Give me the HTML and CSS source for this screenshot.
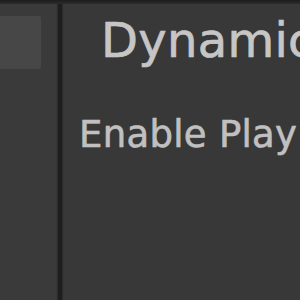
FILE: index.html
```html
<!DOCTYPE html>
<html>
<head>
<meta charset="utf-8">
<link rel="stylesheet" href="styles.css">
</head>
<body>
<div class="topbar"></div>
<div class="main">
  <aside class="sidebar">
    <div class="tile"></div>
  </aside>
  <div class="divider"></div>
  <section class="content">
    <h1 class="title">Dynamic</h1>
    <p class="option">Enable Play</p>
  </section>
</div>
</body>
</html>
```
FILE: styles.css
```css
html, body {
  margin: 0;
  padding: 0;
  width: 300px;
  height: 300px;
  overflow: hidden;
  background: #383838;
  font-family: "DejaVu Sans", sans-serif;
}
.topbar {
  height: 4px;
  background: linear-gradient(#1c1c1c, #2c2c2c);
}
.main {
  display: flex;
  height: 296px;
}
.sidebar {
  width: 58px;
  background: #3a3a3a;
  padding-top: 12px;
  box-sizing: border-box;
}
.tile {
  width: 41px;
  height: 53px;
  background: #474747;
  border-radius: 0 2px 2px 0;
}
.divider {
  width: 4px;
  background: #1e1e1e;
  box-shadow: -1px 0 1px #2c2c2c, 1px 0 1px #2c2c2c;
}
.content {
  flex: 1;
  padding-left: 17px;
  padding-top: 8px;
  white-space: nowrap;
  overflow: hidden;
}
.title {
  margin: 0 0 0 22px;
  font-size: 48px;
  font-weight: normal;
  line-height: 56px;
  letter-spacing: 0.3px;
  color: #c6c6c6;
  -webkit-text-stroke: 0.6px #c6c6c6;
  text-shadow: 0 0 1px rgba(200, 200, 200, 0.4);
}
.option {
  margin: 45px 0 0 0;
  font-size: 37px;
  line-height: 43px;
  letter-spacing: 0.3px;
  color: #c0c0c0;
  -webkit-text-stroke: 0.5px #c0c0c0;
  text-shadow: 0 0 1px rgba(194, 194, 194, 0.4);
}
```
